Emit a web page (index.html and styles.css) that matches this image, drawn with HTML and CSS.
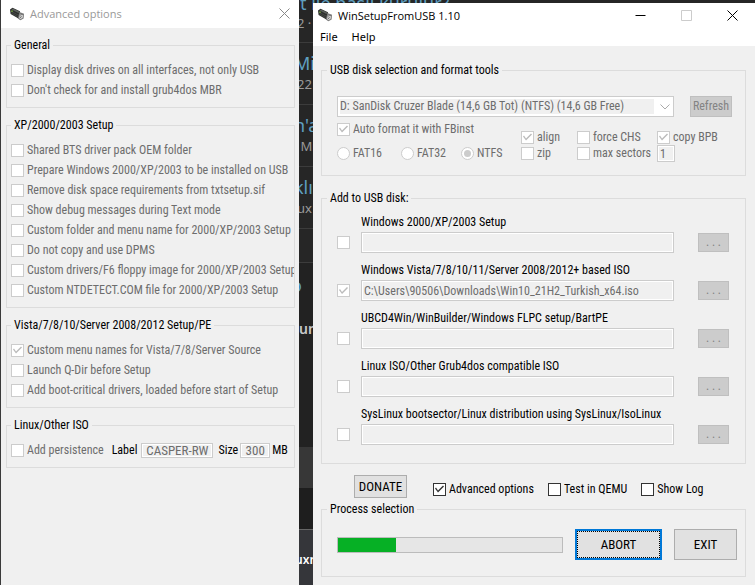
FILE: index.html
```
<!DOCTYPE html>
<html lang="en">
<head>
  <meta charset="UTF-8" />
  <meta name="viewport" content="width=device-width, initial-scale=1.0" />
  <title>WinSetupFromUSB 1.10</title>
  <link rel="stylesheet" href="styles.css">
</head>
<body>

<!-- shared icon -->
<svg class="defs" aria-hidden="true">
  <symbol id="usb" viewBox="0 0 16 14">
    <path d="M1 2.5 L3.5 .8 L11 4.2 L10.5 11 L9 11.2 L1.6 7 Z" fill="#2d2f2d"/>
    <path d="M2.6 2.4 L4 1.6 L10.6 4.8 L9.4 6 Z" fill="#5c605c"/>
    <path d="M1.6 4 L9 8 M2.5 6.2 L8.6 9.6" stroke="#4a4d4a" stroke-width=".8"/>
    <circle cx="3" cy="4.2" r=".9" fill="#6c9a3c"/>
    <path d="M10.4 5 L15 6.8 L14.6 11.4 L11.4 13.2 L8.8 11.4 Z" fill="#777"/>
    <path d="M10.8 7.4 L14 8.2 L13.6 11 L11.4 12.2 L10.2 11 Z" fill="#d8d8d8"/>
    <path d="M11.4 8.8 L12.6 9.4 M11.2 10.4 L12.2 11" stroke="#444" stroke-width=".9"/>
  </symbol>
</svg>

<!-- search results left open behind the two windows -->
<div class="browser" aria-hidden="true">
  <div class="result first"><b>t ile nasıl kurulur?</b><span>2 · M</span></div>
  <div class="result"><b>Min</b><span>22 ·</span></div>
  <div class="result"><b>n'a</b><span>&nbsp;Mi</span></div>
  <div class="result"><b>klı</b><span>ux l</span></div>
  <div class="spacer"></div>
  <div class="more"><b>o</b><strong>um</strong></div>
  <div class="band"></div>
  <div class="band dark"></div>
  <div class="taskbar">uxn</div>
</div>

<div class="desktop">
  <section class="window options">
    <header class="titlebar">
      <svg class="icon"><use href="#usb"/></svg>
      <h2>Advanced options</h2>
      <button class="close" aria-label="Close">
        <svg viewBox="0 0 11 11"><path d="M.5 .5 L10.5 10.5 M10.5 .5 L.5 10.5"/></svg>
      </button>
    </header>
    <div class="body">
      <fieldset>
        <legend>General</legend>
        <label class="row"><input type="checkbox" disabled>Display disk drives on all interfaces, not only USB</label>
        <label class="row"><input type="checkbox" disabled>Don't check for and install grub4dos MBR</label>
      </fieldset>
      <fieldset>
        <legend>XP/2000/2003 Setup</legend>
        <label class="row"><input type="checkbox" disabled>Shared BTS driver pack OEM folder</label>
        <label class="row"><input type="checkbox" disabled>Prepare Windows 2000/XP/2003 to be installed on USB</label>
        <label class="row"><input type="checkbox" disabled>Remove disk space requirements from txtsetup.sif</label>
        <label class="row"><input type="checkbox" disabled>Show debug messages during Text mode</label>
        <label class="row"><input type="checkbox" disabled>Custom folder and menu name for 2000/XP/2003 Setup</label>
        <label class="row"><input type="checkbox" disabled>Do not copy and use DPMS</label>
        <label class="row"><input type="checkbox" disabled>Custom drivers/F6 floppy image for 2000/XP/2003 Setup</label>
        <label class="row"><input type="checkbox" disabled>Custom NTDETECT.COM file for 2000/XP/2003 Setup</label>
      </fieldset>
      <fieldset>
        <legend>Vista/7/8/10/Server 2008/2012 Setup/PE</legend>
        <label class="row"><input type="checkbox" checked disabled>Custom menu names for Vista/7/8/Server Source</label>
        <label class="row"><input type="checkbox" disabled>Launch Q-Dir before Setup</label>
        <label class="row"><input type="checkbox" disabled>Add boot-critical drivers, loaded before start of Setup</label>
      </fieldset>
      <fieldset>
        <legend>Linux/Other ISO</legend>
        <div class="persist">
          <label class="row"><input type="checkbox" disabled>Add persistence</label>
          <label for="plabel">Label</label>
          <input type="text" id="plabel" value="CASPER-RW" disabled>
          <label for="psize">Size</label>
          <input type="text" id="psize" value="300" disabled>
          <span>MB</span>
        </div>
      </fieldset>
    </div>
  </section>

  <section class="window main">
    <header class="titlebar">
      <svg class="icon"><use href="#usb"/></svg>
      <h1>WinSetupFromUSB 1.10</h1>
      <button aria-label="Minimize">
        <svg viewBox="0 0 11 11"><path d="M.5 5.5 H10.5"/></svg>
      </button>
      <button class="off" aria-label="Maximize" disabled>
        <svg viewBox="0 0 11 11"><path d="M.5 .5 H10.5 V10.5 H.5 Z"/></svg>
      </button>
      <button class="close" aria-label="Close">
        <svg viewBox="0 0 11 11"><path d="M.5 .5 L10.5 10.5 M10.5 .5 L.5 10.5"/></svg>
      </button>
    </header>
    <nav class="menu">
      <button>File</button>
      <button>Help</button>
    </nav>
    <div class="body">
      <fieldset class="disk">
        <legend>USB disk selection and format tools</legend>
        <div class="pick">
          <div class="combo">
            <select aria-label="USB disk" disabled>
              <option>D: SanDisk Cruzer Blade (14,6 GB Tot) (NTFS) (14,6 GB Free)</option>
            </select>
            <svg viewBox="0 0 10 6"><path d="M.5 .5 L5 5 L9.5 .5"/></svg>
          </div>
          <button class="btn" disabled>Refresh</button>
        </div>
        <div class="format">
          <div class="fs">
            <label class="row auto"><input type="checkbox" checked disabled>Auto format it with FBinst</label>
            <label class="row"><input type="radio" name="fs" disabled>FAT16</label>
            <label class="row"><input type="radio" name="fs" disabled>FAT32</label>
            <label class="row"><input type="radio" name="fs" checked disabled>NTFS</label>
          </div>
          <div class="flags">
            <label class="row"><input type="checkbox" checked disabled>align</label>
            <label class="row"><input type="checkbox" disabled>force CHS</label>
            <label class="row"><input type="checkbox" checked disabled>copy BPB</label>
            <label class="row"><input type="checkbox" disabled>zip</label>
            <label class="row"><input type="checkbox" disabled>max sectors</label>
            <input type="text" value="1" aria-label="Max sectors" disabled>
          </div>
        </div>
      </fieldset>

      <fieldset class="sources">
        <legend>Add to USB disk:</legend>
        <div class="source">
          <label for="src1">Windows 2000/XP/2003 Setup</label>
          <input type="checkbox" aria-label="Use Windows 2000/XP/2003" disabled>
          <input type="text" id="src1" disabled>
          <button class="btn" disabled>. . .</button>
        </div>
        <div class="source">
          <label for="src2">Windows Vista/7/8/10/11/Server 2008/2012+ based ISO</label>
          <input type="checkbox" aria-label="Use Windows Vista and later" checked disabled>
          <input type="text" id="src2" value="C:\Users\90506\Downloads\Win10_21H2_Turkish_x64.iso" disabled>
          <button class="btn" disabled>. . .</button>
        </div>
        <div class="source">
          <label for="src3">UBCD4Win/WinBuilder/Windows FLPC setup/BartPE</label>
          <input type="checkbox" aria-label="Use UBCD4Win" disabled>
          <input type="text" id="src3" disabled>
          <button class="btn" disabled>. . .</button>
        </div>
        <div class="source">
          <label for="src4">Linux ISO/Other Grub4dos compatible ISO</label>
          <input type="checkbox" aria-label="Use Linux ISO" disabled>
          <input type="text" id="src4" disabled>
          <button class="btn" disabled>. . .</button>
        </div>
        <div class="source">
          <label for="src5">SysLinux bootsector/Linux distribution using SysLinux/IsoLinux</label>
          <input type="checkbox" aria-label="Use SysLinux" disabled>
          <input type="text" id="src5" disabled>
          <button class="btn" disabled>. . .</button>
        </div>
      </fieldset>

      <div class="extras">
        <button class="btn">DONATE</button>
        <label class="row"><input type="checkbox" checked>Advanced options</label>
        <label class="row"><input type="checkbox">Test in QEMU</label>
        <label class="row"><input type="checkbox">Show Log</label>
      </div>

      <fieldset class="process">
        <legend>Process selection</legend>
        <div class="run">
          <progress value="26" max="100" aria-label="Progress"></progress>
          <button class="btn abort">ABORT</button>
          <button class="btn exit">EXIT</button>
        </div>
      </fieldset>
    </div>
  </section>
</div>

</body>
</html>
```
FILE: styles.css
```
:root   { --face:#f0f0f0; --line:#dcdcdc; --ctl:#cccccc; --muted:#6d6d6d; --accent:#0078d7; }
*       { box-sizing:border-box; margin:0; padding:0; }
body    { font:12px/15px "Roboto Condensed",Roboto,"Liberation Sans",sans-serif;
          background:#262626; color:#000; min-height:100vh; position:relative; overflow:hidden; }
button, input, select { font:inherit; color:inherit; }
.defs   { position:absolute; width:0; height:0; }

/* page behind the windows */
.browser { position:absolute; inset:0; overflow:hidden; white-space:nowrap;
           font-family:"Noto Sans",sans-serif; color:#9a9a9a; border-left:1px solid #3a3a3a; }
.result  { height:62px; padding:8px 0 0 293px; border-bottom:1px solid #3c3c3c; }
.result.first { height:43px; padding-top:0; }
.result b, .more b { display:block; font-size:18px; line-height:24px; font-weight:400; color:#5f9fc0; }
.result span { display:block; padding-left:3px; font-size:13px; line-height:18px; }
.result.first b { line-height:6px; padding:0 0 8px 6px; }
.spacer  { height:34px; border-bottom:1px solid #3c3c3c; }
.more    { height:184px; padding:10px 0 0 290px; background:#222; }
.more strong { display:block; padding:20px 0 0 8px; font-size:14px; line-height:24px; font-weight:600; color:#c8c8c8; }
.band    { height:41px; background:#373737; }
.band.dark { background:#1e1e1e; }
.taskbar { height:60px; padding:18px 0 0 294px; border-top:1px solid #666; background:#35363a;
           color:#fff; font-size:12px; line-height:24px; font-weight:600; }

/* windows */
.desktop { position:relative; display:flex; gap:14px; min-height:100vh; padding-left:1px; }
.window  { background:var(--face); min-width:0; }
.options { flex:0 0 298px; }
.main    { flex:1; margin-top:3px; }
.titlebar { display:flex; align-items:center; height:29px; padding-left:8px; background:#fff;
            font-family:"Open Sans",sans-serif; }
.titlebar h1, .titlebar h2 { flex:1; padding-left:5px; font-size:11px; font-weight:400; white-space:nowrap; }
.titlebar h2 { color:#999; }
.titlebar .icon { width:16px; height:14px; }
.titlebar button { width:46px; height:24px; border:0; background:none; color:#000; }
.titlebar button.off { color:#ccc; }
.titlebar button svg { display:block; width:11px; height:11px; margin:auto;
                       fill:none; stroke:currentColor; stroke-width:1; }
.options .titlebar { height:28px; border-bottom:1px solid #fff; }
.options .titlebar button { width:30px; color:#888; }
.main .titlebar { height:24px; padding-left:4px; }
.menu    { display:flex; gap:14px; height:19px; padding-left:7px; background:#fff; }
.menu button { border:0; background:none; font:11px/16px "Noto Sans",sans-serif; }
.options .body { padding:10px 4px 0 5px; }
.main .body { padding:17px 9px 8px 8px; }

/* group boxes */
fieldset { border:1px solid var(--line); min-width:0; }
legend   { padding:0 3px; line-height:15px; }
.main legend { margin-left:-10px; }
.options fieldset { padding:7px 0 7px 4px; margin-bottom:10px; overflow:hidden; }
.row     { display:flex; align-items:center; gap:3px; height:20px; white-space:nowrap; color:var(--muted); }

/* tick boxes and radios */
input[type=checkbox], input[type=radio] { appearance:none; flex:none; width:13px; height:13px;
          background:#fff; border:1px solid #333; color:#333; }
input[type=radio] { border-radius:50%; }
input:disabled[type=checkbox], input:disabled[type=radio] { border-color:var(--ctl); color:#bbb; }
input[type=checkbox]:checked::before { content:""; display:block; width:11px; height:11px; background:currentColor;
          clip-path:polygon(1px 5px, 2px 4px, 4px 7px, 9px 2px, 10px 3px, 4px 9px); }
input[type=radio]:checked::before { content:""; display:block; width:7px; height:7px; margin:2px;
          border-radius:50%; background:#ccc; }

/* text boxes and buttons */
input[type=text] { width:100%; height:21px; padding:0 2px; background:var(--face);
          border:1px solid var(--ctl); box-shadow:inset 0 0 0 1px #fff; color:var(--muted); }
.btn     { background:#e1e1e1; border:1px solid #adadad; font-size:13px; }
.btn:disabled { background:#ccc; border-color:#bfbfbf; color:#838383; font-size:12px; }

.persist { display:flex; align-items:center; height:20px; }
.persist input[type=text] { height:15px; font-size:13px; text-align:center; }
.persist label + label { margin-left:8px; }
#plabel  { width:72px; margin:0 5px 0 4px; }
#psize   { width:30px; margin:0 2px; }

/* disk picker */
.disk    { padding:18px 13px 12px 15px; }
.pick    { display:flex; gap:16px; }
.pick .btn { width:42px; height:21px; }
.combo   { position:relative; flex:1; min-width:0; height:21px; padding:2px; background:#fff; border:1px solid var(--ctl); }
.combo select { appearance:none; display:block; width:calc(100% - 17px); height:15px; border:0;
                background:var(--face); color:var(--muted); opacity:1; }
.combo svg { position:absolute; right:3px; top:7px; width:10px; height:6px; fill:none; stroke:#aaa; }
.format  { display:flex; padding-top:2px; }
.fs      { display:grid; grid-template-columns:64px 60px 60px; row-gap:4px; }
.fs .auto { grid-column:1 / -1; }
.flags   { display:grid; grid-template-columns:56px 80px auto; align-content:start; padding-top:10px; }
.flags .row { height:16px; }
.flags input[type=text] { width:18px; height:17px; }

/* sources */
.sources { margin-top:15px; padding:8px 16px 18px 15px; }
.source  { display:grid; grid-template-columns:13px 1fr 31px; align-items:center; }
.source + .source { margin-top:9px; }
.source label { grid-column:2 / -1; margin-left:11px; padding-top:1px; height:18px; }
.source input[type=text] { width:auto; margin:0 24px 0 11px; }
.source input[type=checkbox] { grid-column:1; }
.source .btn { height:19px; }

.extras  { display:flex; align-items:flex-end; gap:14px; padding:11px 0 4px 33px; }
.extras .btn { width:53px; height:23px; margin-right:12px; }
.extras .row { height:18px; color:#000; }

.process { padding:12px 8px 16px 15px; }
.run     { display:flex; align-items:center; gap:12px; }
progress { appearance:none; flex:1; min-width:0; height:16px; border:1px solid #bcbcbc; background:#e6e6e6; }
progress::-webkit-progress-bar { background:#e6e6e6; }
progress::-webkit-progress-value { background:#06b025; }
.run .btn { height:31px; }
.abort   { width:87px; border:2px solid var(--accent); outline:1px dotted #000; outline-offset:-3px; }
.exit    { width:63px; }
```
